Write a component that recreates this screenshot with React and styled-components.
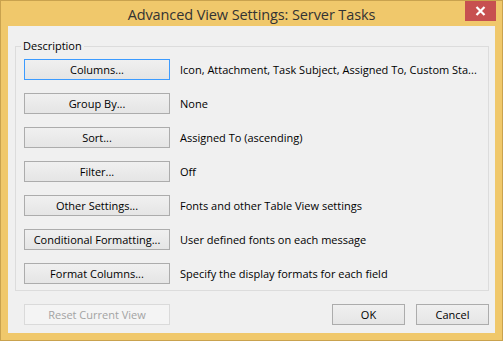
import React from "react";
import styled, { createGlobalStyle } from "styled-components";

const rows = [
  { label: "Columns...", text: "Icon, Attachment, Task Subject, Assigned To, Custom Sta...", focused: true },
  { label: "Group By...", text: "None" },
  { label: "Sort...", text: "Assigned To (ascending)" },
  { label: "Filter...", text: "Off" },
  { label: "Other Settings...", text: "Fonts and other Table View settings" },
  { label: "Conditional Formatting...", text: "User defined fonts on each message" },
  { label: "Format Columns...", text: "Specify the display formats for each field" },
];

const App = () => {
  return (
    <>
      <GlobalStyle />
      <Window>
        <TitleBar>
          <span />
          <Title>Advanced View Settings: Server Tasks</Title>
          <CloseButton>
            <svg width="11" height="10" viewBox="0 0 11 10">
              <path d="M1.5 1 L9.5 9 M9.5 1 L1.5 9" stroke="#fff" strokeWidth="2.2" />
            </svg>
          </CloseButton>
        </TitleBar>
        <Client>
          <GroupBox>
            <Legend>Description</Legend>
            {rows.map((row, idx) => (
              <Row key={idx}>
                <Button $focused={row.focused} $wide>
                  {row.label}
                </Button>
                <RowText>{row.text}</RowText>
              </Row>
            ))}
          </GroupBox>
          <Footer>
            <Button $wide disabled>
              Reset Current View
            </Button>
            <Spacer />
            <Button>OK</Button>
            <Button>Cancel</Button>
          </Footer>
        </Client>
      </Window>
    </>
  );
};

const GlobalStyle = createGlobalStyle`
  body {
    margin: 0;
    font-family: "Open Sans", "Noto Sans", sans-serif;
  }
`;
const Window = styled.div`
  width: 503px;
  height: 341px;
  box-sizing: border-box;
  background: #f0c86b;
  border: 1px solid #c9a24e;
  display: flex;
  flex-direction: column;
`;
const TitleBar = styled.div`
  height: 30px;
  display: grid;
  grid-template-columns: 1fr auto 1fr;
  align-items: center;
`;
const Title = styled.div`
  font-size: 14.5px;
  color: #333;
  letter-spacing: -0.1px;
  padding-top: 1px;
`;
const CloseButton = styled.div`
  justify-self: end;
  align-self: start;
  margin-right: 6px;
  width: 31px;
  height: 20px;
  background: #c75050;
  display: flex;
  align-items: center;
  justify-content: center;
`;
const Client = styled.div`
  flex: 1;
  margin: 0 7px 7px 7px;
  background: #f0f0f0;
  padding: 13px 6px 8px 7px;
  display: flex;
  flex-direction: column;
`;
const GroupBox = styled.fieldset`
  margin: 0;
  padding: 6px 8px 6px 8px;
  border: 1px solid #dcdcdc;
  display: flex;
  flex-direction: column;
  gap: 13px;
`;
const Legend = styled.legend`
  font-size: 11px;
  color: #000;
  padding: 0 2px;
  margin-left: -3px;
  line-height: 14px;
`;
const Row = styled.div`
  display: flex;
  align-items: center;
  gap: 10px;
`;
const RowText = styled.span`
  font-size: 11px;
  color: #000;
  white-space: nowrap;
`;
const Button = styled.button`
  width: ${(p) => (p.$wide ? "146px" : "73px")};
  height: 21px;
  box-sizing: border-box;
  padding: 0;
  font-family: inherit;
  font-size: 11px;
  color: #000;
  background: linear-gradient(#f0f0f0, #e5e5e5);
  border: 1px solid ${(p) => (p.$focused ? "#3c9bff" : "#acacac")};
  white-space: nowrap;

  &:disabled {
    color: #a3a3a3;
    background: #f4f4f4;
    border-color: #dadada;
  }
`;
const Footer = styled.div`
  margin-top: 13px;
  padding-left: 9px;
  display: flex;
  gap: 11px;
`;
const Spacer = styled.div`
  flex: 1;
`;

export default App;
